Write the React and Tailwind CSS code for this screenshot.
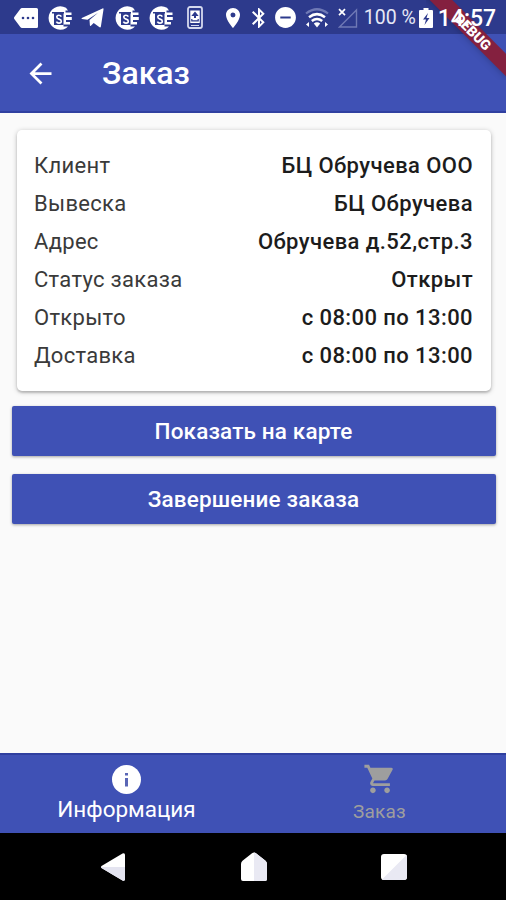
import React from "react";
import {
  MdArrowBack,
  MdBluetooth,
  MdDoNotDisturbOn,
  MdLocationOn,
  MdShoppingCart,
} from "react-icons/md";

const orderRows = [
  { label: "Клиент", value: "БЦ Обручева ООО" },
  { label: "Вывеска", value: "БЦ Обручева" },
  { label: "Адрес", value: "Обручева д.52,стр.3" },
  { label: "Статус заказа", value: "Открыт" },
  { label: "Открыто", value: "с 08:00 по 13:00" },
  { label: "Доставка", value: "с 08:00 по 13:00" },
];

const MessageIcon = () => (
  <svg className="h-5 w-6" viewBox="0 0 24 20" fill="#fff">
    <path d="M8 0h14.5Q24 0 24 1.500v17q0 1.500-1.500 1.500H8Q7 20 6.300 19L.3 11Q-.3 10 .3 9l6-8Q7 0 8 0z" />
    <g fill="#2d3a8c">
      <circle cx="9" cy="10" r="1.300" />
      <circle cx="14" cy="10" r="1.300" />
      <circle cx="19" cy="10" r="1.300" />
    </g>
  </svg>
);

const CoinIcon = () => (
  <svg className="h-6 w-6" viewBox="0 0 24 24">
    <path d="M18 1.800A11.700 11.700 0 1 0 18 22.200L20 20.500h-4.500v-2H22v-2.500h-4v-2h5.800v-3H18v-2h5.500V6.500h-6v-2H20z" fill="#fff" />
    <path d="M4 6h12v1.500H4zM6 7.500h9.500V19H6z" fill="#2d3a8c" />
    <path d="M13.300 10.600q-.6-1.300-2.400-1.300-2.100 0-2.100 1.800 0 1.500 2.200 2 2.300.5 2.300 2.100 0 1.900-2.300 1.900-1.900 0-2.600-1.500" fill="none" stroke="#fff" strokeWidth="1.600" />
  </svg>
);

const TelegramIcon = () => (
  <svg className="h-5 w-6" viewBox="0 0 24 20" fill="#fff">
    <path d="M.8 10 21.500.4q1.300-.4 1 1.100l-2.600 17q-.4 1.500-1.700.6l-5.500-4.100-2.800 2.700q-.8.6-1-.4l-.4-5.300 8.600-7.200L6.500 11.700 1 11q-1-.5-.2-1z" />
  </svg>
);

const PhoneUpdateIcon = () => (
  <svg className="h-[23px] w-4" viewBox="0 0 16 23">
    <rect x="1" y="1" width="14" height="21" rx="2" fill="none" stroke="#d5d9ee" strokeWidth="1.800" />
    <rect x="3.300" y="4.500" width="9.400" height="12.500" fill="#fff" />
    <path d="M8 5.500 4.300 10H7v2h2v-2h2.700z" fill="#2d3a8c" />
    <path d="M4.800 13v1.800h6.400V13" fill="none" stroke="#2d3a8c" strokeWidth="1.200" />
    <path d="M4 19.500h8" stroke="#d5d9ee" strokeWidth="1" />
  </svg>
);

const WifiIcon = () => (
  <svg className="h-5 w-6" viewBox="0 0 24 20" fill="none">
    <path d="M1 5.500Q12-3 23 5.500" stroke="#6f79b5" strokeWidth="2.200" />
    <path d="M4 9.200Q12 3 20 9.200" stroke="#fff" strokeWidth="2.600" />
    <path d="M6.800 13Q12 9 17.200 13" stroke="#fff" strokeWidth="2.600" />
    <path d="M8.800 15.500Q12 13 15.200 15.500L12 19.500z" fill="#fff" />
    <path d="M1 16.500 4 14v5zM23 16.500 20 14v5z" fill="#fff" />
  </svg>
);

const SignalIcon = () => (
  <svg className="h-5 w-5" viewBox="0 0 20 20" fill="none">
    <path d="M18.500 2v17H1.500z" stroke="#6f79b5" strokeWidth="1.400" />
    <path d="m1 1.200 6 6m0-6-6 6" stroke="#fff" strokeWidth="1.700" />
  </svg>
);

const BatteryIcon = () => (
  <svg className="h-5 w-[14px]" viewBox="0 0 14 20">
    <path d="M4.500 0h5v2H13q1 0 1 1v16q0 1-1 1H1q-1 0-1-1V3q0-1 1-1h3.500z" fill="#fff" />
    <path d="M9 5 4 11.500h3l-1.500 5.500L10.500 10h-3z" fill="#2d3a8c" />
  </svg>
);

const InfoIcon = () => (
  <svg className="h-[29px] w-[29px]" viewBox="0 0 29 29">
    <circle cx="14.500" cy="14.500" r="14.500" fill="#fff" />
    <path d="M13 8h3v2.600h-3zM13 13h3v8.500h-3z" fill="#5a66b5" />
  </svg>
);

const Slot = ({ children }) => (
  <div className="flex w-[33.800px] shrink-0 items-center justify-center">{children}</div>
);

const StatusBar = () => (
  <div className="flex h-[34px] items-center bg-[#2d3a8c] pt-px pl-[9px] text-white">
    <Slot><MessageIcon /></Slot>
    <Slot><CoinIcon /></Slot>
    <Slot><TelegramIcon /></Slot>
    <Slot><CoinIcon /></Slot>
    <Slot><CoinIcon /></Slot>
    <Slot><PhoneUpdateIcon /></Slot>
    <MdLocationOn className="ml-[9px] h-6 w-6 shrink-0" />
    <MdBluetooth className="ml-[2px] h-6 w-6 shrink-0" />
    <MdDoNotDisturbOn className="ml-[2px] h-[25px] w-[25px] shrink-0" />
    <div className="ml-[7px] shrink-0"><WifiIcon /></div>
    <div className="ml-[9px] shrink-0"><SignalIcon /></div>
    <span className="ml-[6px] w-[55px] shrink-0 pt-px text-[19.500px] leading-none whitespace-nowrap text-[#e6e8f5]">
      100 %
    </span>
    <div className="shrink-0"><BatteryIcon /></div>
    <span className="relative z-20 ml-[5px] pt-px text-[23px] leading-none font-medium">14:57</span>
  </div>
);

// Flutter debug banner across the top right corner
const DebugBanner = () => (
  <div className="pointer-events-none absolute top-0 right-0 z-10 h-20 w-20 overflow-hidden">
    <div className="absolute top-[24px] left-[-13px] flex h-4 w-[120px] rotate-45 items-center justify-center bg-[#84203f] text-[14px] leading-none font-black text-white shadow-md">
      DEBUG
    </div>
  </div>
);

const OrderCard = () => (
  <div className="mr-[15px] ml-[17px] mt-[17px] h-[261px] rounded-[5px] bg-white px-[18px] pt-4 shadow-[0_1px_5px_rgba(0,0,0,0.25),0_2px_2px_rgba(0,0,0,0.14)]">
    {orderRows.map((row) => (
      <div key={row.label} className="flex h-[38px] items-center justify-between text-[22px] text-[#1c1c1c]">
        <span className="-ml-px tracking-[0.3px] text-[#3a3a3a]">{row.label}</span>
        <span className="font-medium tracking-[0.42px]">{row.value}</span>
      </div>
    ))}
  </div>
);

const ActionButton = ({ children }) => (
  <button className="flex h-[50px] items-center justify-center rounded-[2px] bg-[#3f51b5] pt-px pr-px text-[22.500px] font-medium tracking-[0.15px] text-white shadow-[0_1px_3px_rgba(0,0,0,0.35)]">
    {children}
  </button>
);

const BottomTabs = () => (
  <div className="flex h-[80px] border-t-2 border-[#2f3f9f] bg-[#3f51b5]">
    <div className="flex flex-1 flex-col items-center pt-[10px] text-white">
      <InfoIcon />
      <span className="mt-[2px] text-[22.500px] leading-[26px]">Информация</span>
    </div>
    <div className="flex flex-1 flex-col items-center pt-[7px] text-[#9e9e9e]">
      <MdShoppingCart className="h-[34px] w-[34px]" />
      <span className="mt-[3px] text-[19px] leading-[26px] tracking-[0.2px]">Заказ</span>
    </div>
  </div>
);

const SystemNav = () => (
  <div className="flex h-[67px] items-center justify-between bg-black pr-[98px] pl-[99px]">
    <svg className="h-7 w-7" viewBox="0 0 28 28">
      <path d="M2.500 13Q1.500 14 2.500 15l21 12.500Q26 28.500 26 26V2Q26-.5 23.500.5z" fill="#fff" />
      <path d="M2 14h24v12q0 2.500-2.500 1.500L2.500 15z" fill="#e4e4f0" />
    </svg>
    <svg className="h-[30px] w-7" viewBox="0 0 28 30">
      <path d="M1 12q0-2 1.500-3.200L12 1.200q2-1.400 4 0l9.500 7.600Q27 10 27 12v15q0 2-2 2H3q-2 0-2-2z" fill="#fff" />
      <path d="M14 .5q1 0 2 .7l9.500 7.600Q27 10 27 12v15q0 2-2 2H14z" fill="#e9e9f3" />
    </svg>
    <svg className="h-7 w-7" viewBox="0 0 28 28">
      <rect x="1" y="1" width="26" height="26" rx="3" fill="#fff" />
      <path d="M26.500 2 2 26.500q.5.500 2 .5h20q3 0 3-3V4q0-1.500-.5-2z" fill="#e9e9f3" />
    </svg>
  </div>
);

const App = () => {
  return (
    <div className="relative flex h-[900px] w-[506px] flex-col overflow-hidden bg-[#fafafa] font-[Roboto,sans-serif]">
      <StatusBar />
      <DebugBanner />

      <header className="flex h-[79px] items-center border-b-2 border-[#3040a0] bg-[#3f51b5] pt-px pl-6 text-white">
        <MdArrowBack className="h-[33px] w-[33px]" />
        <h1 className="ml-[45px] text-[32px] font-medium">Заказ</h1>
      </header>

      <main className="flex-1">
        <OrderCard />
        <div className="mr-[10px] ml-3 mt-[15px] flex flex-col gap-[18px]">
          <ActionButton>Показать на карте</ActionButton>
          <ActionButton>Завершение заказа</ActionButton>
        </div>
      </main>

      <BottomTabs />
      <SystemNav />
    </div>
  );
};

export default App;
